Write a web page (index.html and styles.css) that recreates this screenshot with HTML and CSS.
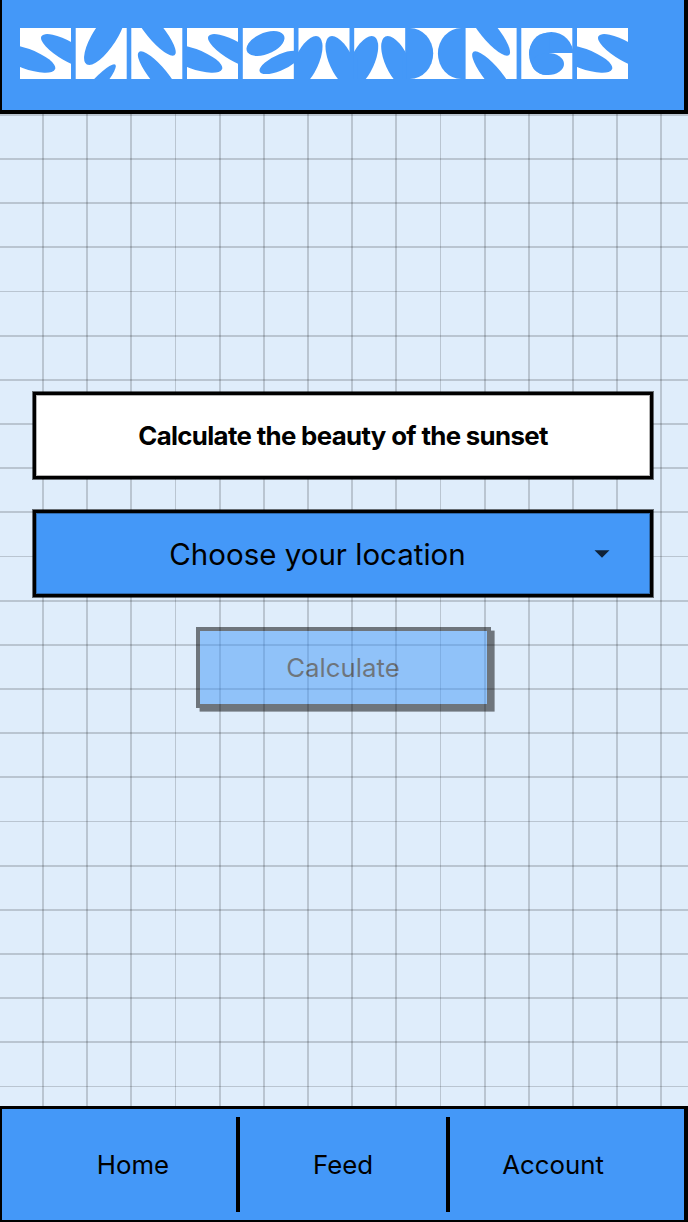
FILE: index.html
```html
<!DOCTYPE html>
<html lang="en">
<head>
<meta charset="utf-8">
<title>Sunsettings</title>
<link rel="stylesheet" href="styles.css">
</head>
<body>
<div class="app">
  <header class="header">
    <svg class="logo" width="610" height="51" viewBox="-1 0 610 51" role="img" aria-label="Sunsettings">
      <defs>
        <symbol id="tile-s" viewBox="-1 0 53 51">
          <rect class="tile" width="51" height="51"/>
          <ellipse class="petal" rx="31" ry="10" transform="translate(6 30.5) rotate(20)"/>
          <ellipse class="petal" rx="30.6" ry="9.7" transform="translate(48 23.4) rotate(29.8)"/>
        </symbol>
        <symbol id="tile-u" viewBox="-1 0 53 51">
          <rect class="tile" width="51" height="51"/>
          <circle class="petal" r="1" transform="matrix(13.7 0 -15.7 29 29.2 8)"/>
          <circle class="petal" r="1" transform="matrix(8.3 0 -20 23.7 18.5 60)"/>
        </symbol>
        <symbol id="tile-n" viewBox="-1 0 53 51">
          <rect class="tile" width="51" height="51"/>
          <circle class="petal" r="1" transform="matrix(10.9 0 18 24.7 23.4 3)"/>
          <circle class="petal" r="1" transform="matrix(10.9 0 18 24.7 27.6 48)"/>
        </symbol>
        <symbol id="tile-e" viewBox="-1 0 53 51">
          <rect class="tile" width="51" height="51"/>
          <circle class="petal" r="1" transform="matrix(17.1 0 -8.3 12.5 22.7 15.5)"/>
          <circle class="petal" r="1" transform="matrix(15 0 -14 11.7 37.2 34.4)"/>
        </symbol>
        <symbol id="tile-t" viewBox="-1 0 53 51">
          <rect class="tile" width="51" height="51"/>
          <circle class="petal" r="1" transform="matrix(12.9 0 -9.5 26 8 34)"/>
          <circle class="petal" r="1" transform="matrix(12.9 0 9.5 26 43 34)"/>
          <rect class="petal" x="-1" y="30" width="4" height="21"/>
          <rect class="petal" x="48" y="30" width="4" height="21"/>
        </symbol>
        <symbol id="tile-i" viewBox="-1 0 53 51">
          <rect class="tile" width="51" height="51"/>
          <ellipse class="petal" cx="0" cy="25.5" rx="23.3" ry="25.5"/>
          <ellipse class="petal" cx="51.3" cy="25.5" rx="23.3" ry="25.5"/>
        </symbol>
        <symbol id="tile-g" viewBox="-1 0 53 51">
          <rect class="tile" width="51" height="51"/>
          <svg width="52" height="25"><ellipse class="petal" cx="30" cy="27" rx="22.3" ry="23"/></svg>
          <svg width="28" height="51"><ellipse class="petal" cx="25" cy="26" rx="17.3" ry="21"/></svg>
          <ellipse class="petal" cx="26.7" cy="36" rx="16" ry="11"/>
        </symbol>
      </defs>
      <use href="#tile-s" x="-1" width="53" height="51"/>
      <use href="#tile-u" x="54.7" width="53" height="51"/>
      <use href="#tile-n" x="110.3" width="53" height="51"/>
      <use href="#tile-s" x="166" width="53" height="51"/>
      <use href="#tile-e" x="221.8" width="53" height="51"/>
      <use href="#tile-t" x="277.5" width="53" height="51"/>
      <use href="#tile-t" x="333.2" width="53" height="51"/>
      <use href="#tile-i" x="388.9" width="53" height="51"/>
      <use href="#tile-n" x="444.6" width="53" height="51"/>
      <use href="#tile-g" x="500.3" width="53" height="51"/>
      <use href="#tile-s" x="556" width="53" height="51"/>
    </svg>
  </header>
  <main class="main">
    <h1 class="heading">Calculate the beauty of the sunset</h1>
    <div class="select">
      <span class="select-label">Choose your location</span>
      <svg class="caret" width="16" height="8" viewBox="0 0 16 8"><path d="M0.5 0.2H15.5L8 7.8Z"/></svg>
    </div>
    <button class="calculate" disabled>Calculate</button>
  </main>
  <nav class="nav">
    <a class="nav-item">Home</a>
    <a class="nav-item">Feed</a>
    <a class="nav-item">Account</a>
  </nav>
</div>
</body>
</html>
```
FILE: styles.css
```css
* { box-sizing: border-box; }

body {
  margin: 0;
  font-family: Inter, "Liberation Sans", sans-serif;
  color: #000;
  --blue: #4498f8;
}

.app {
  display: flex;
  flex-direction: column;
  width: 688px;
  height: 1222px;
  overflow: hidden;
  background-color: #dfedfb;
}

.header {
  flex: none;
  height: 114px;
  padding: 28px 17px 0;
  background: var(--blue);
  border: solid #000;
  border-width: 0 4px 4px 2px;
}

.logo { display: block; }
.tile { fill: #fff; }
.petal { fill: var(--blue); }

.main {
  flex: 1;
  display: flex;
  flex-direction: column;
  align-items: center;
  padding: 278px 35px 0 33px;
  --g: rgba(0, 0, 0, 0.17);
  background-image:
    repeating-linear-gradient(to right,
      transparent 0 42px, var(--g) 42px 44px,
      transparent 44px 86px, var(--g) 86px 88px,
      transparent 88px 130px, var(--g) 130px 132px,
      transparent 132px 175px, var(--g) 175px 176px,
      transparent 176px 219px, var(--g) 219px 221px,
      transparent 221px 263px, var(--g) 263px 265px),
    repeating-linear-gradient(to bottom,
      var(--g) 0 2px, transparent 2px 44px,
      var(--g) 44px 46px, transparent 46px 88px,
      var(--g) 88px 90px, transparent 90px 132px,
      var(--g) 132px 134px, transparent 134px 177px,
      var(--g) 177px 178px, transparent 178px 221px,
      var(--g) 221px 223px, transparent 223px 265px);
}

.heading,
.select {
  width: 620px;
  height: 87px;
  margin: 0;
  border: 3px solid #000;
  box-shadow: 0 0 0 1px rgba(0, 0, 0, 0.55), inset 0 0 0 1px rgba(0, 0, 0, 0.3);
  display: flex;
  align-items: center;
}

.heading {
  justify-content: center;
  margin-bottom: 31px;
  background: #fff;
  font-size: 25.8px;
  font-weight: 700;
  letter-spacing: -0.65px;
}

.select {
  margin-bottom: 30px;
  background: var(--blue);
  padding: 0 40px 0 0;
  font-size: 29.5px;
}

.select-label { flex: 1; padding-left: 5px; text-align: center; }
.caret { fill: #0f2238; }

.calculate {
  width: 295px;
  height: 81px;
  padding: 0;
  border: 4px solid #000;
  background: var(--blue);
  box-shadow: 3.6px 3.6px 0 #000;
  opacity: 0.5;
  font: 400 25.8px Inter, sans-serif;
  color: #000;
}

.nav {
  flex: none;
  display: flex;
  height: 116px;
  padding: 8px 28px;
  background: var(--blue);
  border: solid #000;
  border-width: 3px 4px 2px 2px;
}

.nav-item {
  flex: 1;
  display: flex;
  align-items: center;
  justify-content: center;
  font-size: 25.8px;
}

.nav-item + .nav-item {
  flex-basis: 4px;
  border-left: 4px solid #000;
}
```
